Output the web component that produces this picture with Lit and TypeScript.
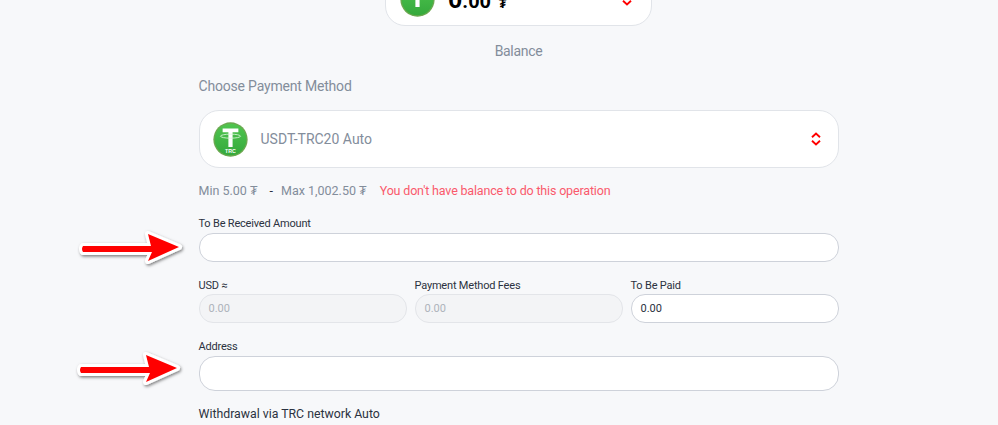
import { LitElement, html, css, svg } from "lit";
import { customElement } from "lit/decorators.js";

const coin = (id: string, trc: boolean) => html`<svg class="coin" width="35" height="35" viewBox="0 0 40 40">
  <defs><linearGradient id=${id} x1="0" y1="0" x2="0" y2="1"><stop offset="0" stop-color="#4fc54f"/><stop offset="1" stop-color="#35a93c"/></linearGradient></defs>
  <circle cx="20" cy="20" r="19.6" fill="#6aa84f"/>
  <circle cx="20" cy="20" r="18" fill="url(#${id})"/>
  <path d="M11 7.5h18v4.2h-6.6v16.8h-4.8V11.700H11z" fill="#fff"/>
  <ellipse cx="20" cy="16.200" rx="11.500" ry="2.300" fill="none" stroke="#d8f3d8" stroke-width="1"/>
  ${trc ? svg`<text x="20" y="35.500" text-anchor="middle" font-family="Liberation Sans" font-size="6" font-weight="700" fill="#fff">TRC</text>` : ""}
</svg>`;

const shape = "M6 19H74L71 7 102 20 71 34 75 25H6Q4 22 6 19Z";
const arrow = (id: string) => html`<svg width="110" height="44" viewBox="0 0 110 44">
  <defs><filter id=${id} x="-10%" y="-20%" width="120%" height="150%"><feDropShadow dx="1" dy="1.500" stdDeviation="1.500" flood-color="#000" flood-opacity=".5"/></filter></defs>
  <path d=${shape} fill="#fff" stroke="#fff" stroke-width="6" stroke-linejoin="round" filter="url(#${id})"/>
  <path d=${shape} fill="#f00"/>
</svg>`;

const chevrons = html`<svg width="12" height="14" viewBox="0 0 12 14" fill="none" stroke="#f00" stroke-width="1.9">
  <path d="M2 5.200 6 1.600l4 3.600M2 8.800l4 3.600 4-3.600"/></svg>`;

@customElement("app-root")
export class AppRoot extends LitElement {
  static styles = css`
    :host { display: block; height: 425px; overflow: hidden; background: #f7f8fa; position: relative;
      font-family: "Roboto", "Liberation Sans", sans-serif; color: #2b3240; }
    .page { display: flex; flex-direction: column; align-items: center; margin-top: -32px; padding-left: 39px; }
    .balance-card { box-sizing: border-box; width: 267px; height: 58px; background: #fff; border: 1px solid #e1e4e9;
      border-radius: 20px; display: flex; align-items: center; padding: 4px 18px 0 14px; gap: 13px; }
    .amount { font-size: 25px; font-weight: 700; color: #000; display: flex; align-items: baseline; }
    .amount .dec { font-size: 20px; }
    .amount small { font-size: 12px; margin-left: 8px; }
    .grow { flex: 1; }
    .caption { margin-top: 15px; height: 20px; line-height: 20px; font-size: 14px; letter-spacing: -.3px; color: #838d9b; }
    .form { box-sizing: border-box; width: 640px; display: flex; flex-direction: column; margin-top: 15px; }
    .title { font-size: 14px; line-height: 20px; letter-spacing: -.19px; color: #838d9b; }
    .select { box-sizing: border-box; margin-top: 14px; height: 58px; background: #fff; border: 1px solid #e1e4e9;
      border-radius: 20px; display: flex; align-items: center; padding: 0 16px 0 13px; gap: 13px;
      font-size: 14px; color: #838d9b; }
    .limits { margin-top: 14px; height: 18px; line-height: 18px; font-size: 12.5px; color: #838d9b; display: flex; white-space: pre; }
    .dash { color: #2b3240; margin: 0 8px 0 12px; }
    .err { color: #fa5a6c; margin-left: 13px; letter-spacing: -.17px; }
    .label { display: block; font-size: 11px; line-height: 14px; letter-spacing: -.19px; color: #2b3240; margin-bottom: 2px; }
    .field { box-sizing: border-box; display: flex; align-items: center; background: #fff; border: 1px solid #ced2da;
      border-radius: 14px; padding: 0 9px; font-size: 11px; color: #2b3240; height: 29px; }
    .first { margin-top: 17px; }
    .row { display: grid; grid-template-columns: repeat(3, 1fr); gap: 8px; margin-top: 17px; }
    .row .label { margin-bottom: 1px; }
    .off { background: #f3f4f6; border-color: #e3e5e9; color: #adb3bb; }
    .addr { margin-top: 17px; }
    .addr .field { height: 35px; border-radius: 16px; }
    .via { margin-top: 15px; font-size: 12.3px; line-height: 16px; color: #2b3240; }
    .arrow { position: absolute; display: block; }
    .a1 { left: 77px; top: 227px; }
    .a2 { left: 75px; top: 348px; }
  `;

  render() {
    return html`
      <div class="page">
        <div class="balance-card">
          ${coin("g1", false)}
          <span class="amount">0<span class="dec">.00</span><small>₮</small></span>
          <span class="grow"></span>
          ${chevrons}
        </div>
        <div class="caption">Balance</div>
        <div class="form">
          <div class="title">Choose Payment Method</div>
          <div class="select">${coin("g2", true)}<span class="grow">USDT-TRC20 Auto</span>${chevrons}</div>
          <div class="limits"><span>Min 5.00 ₮</span><span class="dash">-</span><span>Max 1,002.50 ₮</span><span class="err">You don't have balance to do this operation</span></div>
          <div class="first"><span class="label">To Be Received Amount</span><div class="field"></div></div>
          <div class="row">
            <div class="cell"><span class="label">USD ≈</span><div class="field off">0.00</div></div>
            <div class="cell"><span class="label">Payment Method Fees</span><div class="field off">0.00</div></div>
            <div class="cell"><span class="label">To Be Paid</span><div class="field">0.00</div></div>
          </div>
          <div class="addr"><span class="label">Address</span><div class="field"></div></div>
          <div class="via">Withdrawal via TRC network Auto</div>
        </div>
      </div>
      <span class="arrow a1">${arrow("s1")}</span>
      <span class="arrow a2">${arrow("s2")}</span>
    `;
  }
}
